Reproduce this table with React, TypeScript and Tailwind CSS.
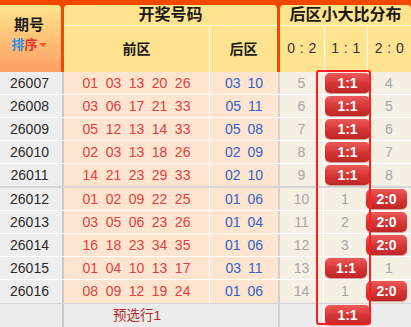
const font = "font-['Liberation_Sans','Noto_Sans_CJK_SC',sans-serif]"

type Row = {
  no: string
  front: string[]
  back: string[]
  a: string
  b: string
  c: string
}

const rows: Row[] = [
  { no: '26007', front: ['01', '03', '13', '20', '26'], back: ['03', '10'], a: '5', b: '1:1', c: '4' },
  { no: '26008', front: ['03', '06', '17', '21', '33'], back: ['05', '11'], a: '6', b: '1:1', c: '5' },
  { no: '26009', front: ['05', '12', '13', '14', '33'], back: ['05', '08'], a: '7', b: '1:1', c: '6' },
  { no: '26010', front: ['02', '03', '13', '18', '26'], back: ['02', '09'], a: '8', b: '1:1', c: '7' },
  { no: '26011', front: ['14', '21', '23', '29', '33'], back: ['02', '10'], a: '9', b: '1:1', c: '8' },
  { no: '26012', front: ['01', '02', '09', '22', '25'], back: ['01', '06'], a: '10', b: '1', c: '2:0' },
  { no: '26013', front: ['03', '05', '06', '23', '26'], back: ['01', '04'], a: '11', b: '2', c: '2:0' },
  { no: '26014', front: ['16', '18', '23', '34', '35'], back: ['01', '06'], a: '12', b: '3', c: '2:0' },
  { no: '26015', front: ['01', '04', '10', '13', '17'], back: ['03', '11'], a: '13', b: '1:1', c: '1' },
  { no: '26016', front: ['08', '09', '12', '19', '24'], back: ['01', '06'], a: '14', b: '1', c: '2:0' },
]

const Badge = ({ text, w }: { text: string; w: string }) => (
  <div
    className={`${w} h-[20px] shrink-0 rounded-[5px] bg-gradient-to-b from-[#ec5a5a] via-[#d63636] to-[#c02626] text-white font-bold text-[14px] leading-[20px] text-center shadow-[0_1px_1px_rgba(120,0,0,0.35)]`}
  >
    {text}
  </div>
)

const Stat = ({ v, badgeW, ml }: { v: string; badgeW: string; ml: string }) =>
  v.includes(':') ? (
    <div className={`h-full flex items-start pt-[1px] ${ml}`}>
      <Badge text={v} w={badgeW} />
    </div>
  ) : (
    <div className="h-full flex items-center justify-center text-[#a6a6a6] text-[14px]">{v}</div>
  )

export default function App() {
  return (
    <div className={`relative w-[411px] h-[327px] overflow-hidden bg-white ${font}`}>
      {/* header */}
      <div className="flex gap-[3px] bg-[#f24800] pt-[5px] h-[72px]">
        <div className="w-[61px] rounded-tr-[4px] bg-gradient-to-b from-[#ffe48e] to-[#ff9f63] flex flex-col items-center pt-[10px] pr-[3px]">
          <div className="text-[15px] font-bold text-[#1a1a1a] leading-[20px]">期号</div>
          <div className="flex items-center text-[13px] font-bold leading-[18px] mt-[1px]">
            <span className="text-[#2b8fe8]">排</span>
            <span className="text-[#e2332b]">序</span>
            <span className="ml-[1px] w-0 h-0 border-l-[4px] border-r-[4px] border-t-[4px] border-l-transparent border-r-transparent border-t-[#f05a18]" />
          </div>
        </div>

        <div className="w-[213px] rounded-t-[4px] bg-[#ffe38e] flex flex-col">
          <div className="h-[21px] border-b border-white flex items-center justify-center text-[16px] font-bold text-[#1a1a1a]">
            开奖号码
          </div>
          <div className="flex-1 flex">
            <div className="w-[146px] border-r border-white flex items-center justify-center text-[14px] font-bold text-[#1a1a1a]">
              前区
            </div>
            <div className="flex-1 flex items-center justify-center text-[14px] font-bold text-[#1a1a1a]">后区</div>
          </div>
        </div>

        <div className="w-[131px] rounded-t-[4px] bg-[#ffe38e] flex flex-col">
          <div className="h-[21px] border-b border-white flex items-center justify-center text-[16px] font-bold text-[#1a1a1a]">
            后区小大比分布
          </div>
          <div className="flex-1 flex text-[14px] text-[#333] tracking-[0.5px] pb-[2px]">
            <div className="w-[45px] border-r border-white flex items-center justify-center">0 : 2</div>
            <div className="w-[43px] border-r border-white flex items-center justify-center">1 : 1</div>
            <div className="flex-1 flex items-center justify-center">2 : 0</div>
          </div>
        </div>
      </div>

      {/* rows */}
      {rows.map((r, i) => (
        <div
          key={r.no}
          className={`flex ${
            i === 4
              ? 'h-[24px] border-b-2 border-[#d6d6d6]'
              : i === 9
                ? 'h-[24px] border-b border-[#d6d6d6]'
                : 'h-[23px] border-b border-white'
          }`}
        >
          <div className="w-[64px] bg-[#eeeeee] border-r-2 border-[#cbcbcb] flex items-center justify-center pr-[3px] text-[14px] text-[#2a2a2a]">
            {r.no}
          </div>
          <div className="w-[216px] bg-[#ffe5cf] border-r-2 border-[#d2d2d2] flex text-[14px]">
            <div className="w-[146px] border-r border-white flex items-center justify-center gap-[7.5px] text-[#e53e3e]">
              {r.front.map((n, k) => (
                <span key={k}>{n}</span>
              ))}
            </div>
            <div className="flex-1 flex items-center justify-center gap-[7px] text-[#2f63cc]">
              {r.back.map((n, k) => (
                <span key={k}>{n}</span>
              ))}
            </div>
          </div>
          <div className="flex-1 bg-[#f6f0e4] flex">
            <div className="w-[44px] border-r border-white">
              <Stat v={r.a} badgeW="w-[40px]" ml="" />
            </div>
            <div className="w-[43px] border-r border-white">
              <Stat v={r.b} badgeW={i === 8 ? 'w-[42px]' : 'w-[45px]'} ml="ml-[1px]" />
            </div>
            <div className="flex-1">
              <Stat v={r.c} badgeW="w-[41px]" ml="-ml-[1px]" />
            </div>
          </div>
        </div>
      ))}

      {/* footer */}
      <div className="flex h-[24px] bg-[#ececec]">
        <div className="w-[64px] border-r-2 border-[#cbcbcb]" />
        <div className="w-[216px] border-r-2 border-[#d2d2d2] flex">
          <div className="w-[146px] flex items-center justify-center text-[13.5px] text-[#b02a2a]">预选行1</div>
          <div className="flex-1" />
        </div>
        <div className="flex-1 flex">
          <div className="w-[44px] border-r border-white" />
          <div className="w-[43px] border-r border-white pt-[1px] pl-[1px]">
            <Badge text="1:1" w="w-[45px]" />
          </div>
          <div className="flex-1" />
        </div>
      </div>

      {/* highlight outline over the 1:1 column */}
      <div className="absolute left-[316px] top-[70px] w-[55px] h-[255px] border-2 border-[#ff1c1c] rounded-[3px] pointer-events-none" />
    </div>
  )
}
